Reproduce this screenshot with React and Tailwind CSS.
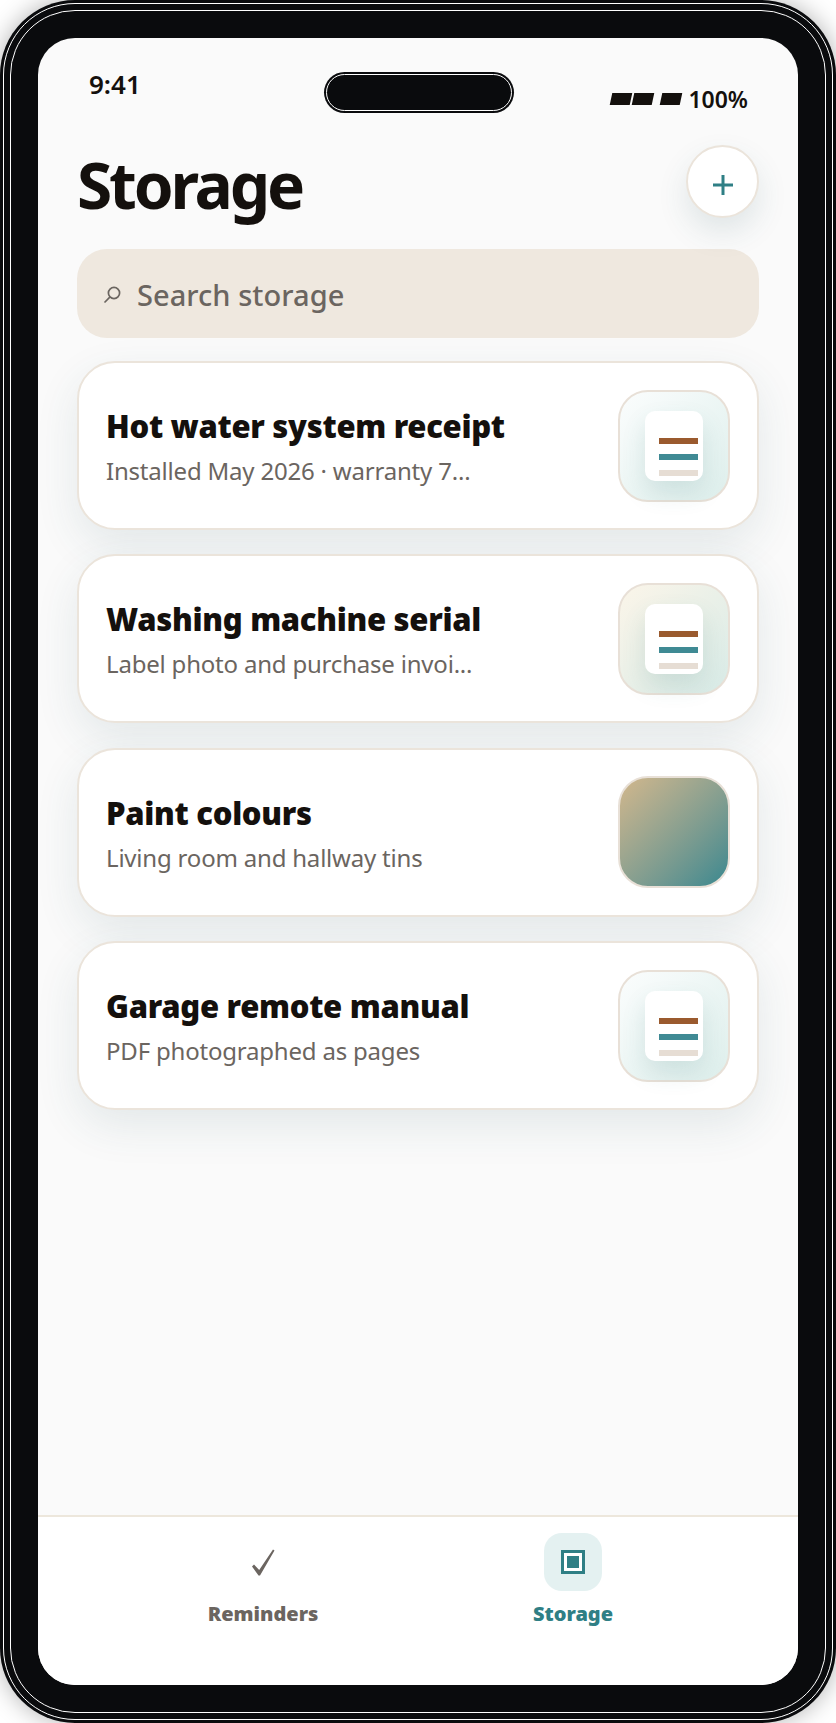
import React from "react";

const items = [
  { title: "Hot water system receipt", sub: "Installed May 2026 · warranty 7...", thumb: "bg-gradient-to-br from-[#fbfdfd] to-[#deefec]" },
  { title: "Washing machine serial", sub: "Label photo and purchase invoi...", thumb: "bg-gradient-to-br from-[#fbf5e9] to-[#d8ebe7]" },
  { title: "Paint colours", sub: "Living room and hallway tins", thumb: "bg-gradient-to-br from-[#d2b78c] to-[#37888f]", plain: true },
  { title: "Garage remote manual", sub: "PDF photographed as pages", thumb: "bg-gradient-to-br from-[#fbfdfd] to-[#deefec]" },
];

const Thumb = ({ item }) => (
  <div className={`w-[112px] h-[112px] shrink-0 rounded-[30px] border-2 border-[#e8e0d7] flex items-center justify-center ${item.thumb}`}>
    {!item.plain && (
      <div className="w-[58px] h-[70px] rounded-[10px] bg-white shadow-[0_12px_24px_rgba(47,110,115,0.14)] flex flex-col gap-[10px] pt-[27px] pl-[14px] pr-[5px]">
        <div className="h-[6px] bg-[#9a5a2e]"></div>
        <div className="h-[6px] bg-[#3f8a94]"></div>
        <div className="h-[6px] bg-[#e6ddd4]"></div>
      </div>
    )}
  </div>
);

const Card = ({ item }) => (
  <div className="h-[169px] rounded-[38px] bg-white border-2 border-[#ebe4db] shadow-[0_16px_44px_rgba(47,90,100,0.11)] flex items-center justify-between pl-[27px] pr-[27px]">
    <div className="min-w-0 pt-[3px]">
      <div className="text-[31px] leading-[38px] font-black text-[#14100d] tracking-[-0.3px]">{item.title}</div>
      <div className="mt-[10px] text-[24px] leading-[32px] text-[#6b6560] tracking-[-0.2px]">{item.sub}</div>
    </div>
    <Thumb item={item} />
  </div>
);

export default function App() {
  return (
    <div className="w-[836px] h-[1723px] bg-white font-['Noto_Sans','Open_Sans',sans-serif] overflow-hidden">
      {/* phone frame with its two thin white rings */}
      <div className="h-full rounded-[75px] bg-[#0a0b0d] p-[3px] shadow-[0_0_24px_rgba(0,0,0,0.3)]">
        <div className="h-full rounded-[72px] border border-white p-[6px]">
          <div className="h-full rounded-[65px] border border-white p-[27px]">
            <div className="h-full rounded-[37px] bg-[#fafafa] overflow-hidden flex flex-col">
              {/* status bar */}
              <div className="grid grid-cols-[1fr_190px_1fr] pt-[31px] pl-[51px] pr-[50px] shrink-0">
                <div className="text-[26px] leading-[30px] font-semibold text-[#14100d]">9:41</div>
                <div className="mt-[3px] h-[41px] rounded-full bg-[#0a0b0d] p-[2px]">
                  <div className="h-full rounded-full border border-white bg-[#0a0b0d]"></div>
                </div>
                <div className="mt-[15px] flex items-center justify-end gap-[7px] text-[23px] leading-[28px] font-semibold text-[#14100d]">
                  <div className="flex items-center">
                    <div className="w-[20px] h-[12px] bg-[#14100d] -skew-x-12"></div>
                    <div className="ml-[2px] w-[20px] h-[12px] bg-[#14100d] -skew-x-12"></div>
                    <div className="ml-[8px] w-[20px] h-[12px] bg-[#14100d] -skew-x-12"></div>
                  </div>
                  <span>100%</span>
                </div>
              </div>

              <div className="flex-1 px-[39px] pt-[32px]">
                {/* header */}
                <div className="flex items-center justify-between h-[72px]">
                  <h1 className="mt-[7px] text-[64px] leading-[72px] font-bold text-[#14100d] tracking-[-3.2px]">Storage</h1>
                  <div className="w-[73px] h-[73px] rounded-full bg-white border-2 border-[#ebe4db] shadow-[0_14px_30px_rgba(47,90,100,0.13)] flex items-center justify-center">
                    <svg width="22" height="22" viewBox="0 0 22 22" className="mt-[7px]">
                      <path d="M11 1v20M1 11h20" stroke="#2f7f85" strokeWidth="3" fill="none" />
                    </svg>
                  </div>
                </div>

                {/* search */}
                <div className="mt-[32px] h-[89px] rounded-[30px] bg-[#efe8df] flex items-center pl-[26px] gap-[16px]">
                  <svg width="18" height="18" viewBox="0 0 18 18" className="mt-[2px]">
                    <circle cx="11" cy="7" r="5.6" stroke="#6b6560" strokeWidth="1.7" fill="none" />
                    <path d="M6.8 11.2L1.5 16.5" stroke="#6b6560" strokeWidth="1.7" fill="none" />
                  </svg>
                  <span className="pt-[3px] text-[29px] leading-[36px] font-medium text-[#6b6560] tracking-[0.05px]">Search storage</span>
                </div>

                {/* list */}
                <div className="mt-[23px] flex flex-col gap-[24.4px]">
                  {items.map((item) => (
                    <Card key={item.title} item={item} />
                  ))}
                </div>
              </div>

              {/* tab bar */}
              <div className="h-[170px] shrink-0 bg-white border-t-2 border-[#ede7dc] grid grid-cols-2 px-[70px] pt-[16px]">
                <div className="flex flex-col items-center">
                  <div className="h-[58px] flex items-center justify-center">
                    <svg width="24" height="27" viewBox="0 0 24 27">
                      <path d="M1 17.5L3 15.5L8.2 21L22 0.5L23.5 1.5L9 26.5L7.5 26.5Z" fill="#6b6560" />
                    </svg>
                  </div>
                  <div className="mt-[9px] text-[20px] leading-[28px] font-black text-[#6b6560]">Reminders</div>
                </div>
                <div className="flex flex-col items-center">
                  <div className="w-[58px] h-[58px] rounded-[18px] bg-[#e4f1f1] flex items-center justify-center">
                    <svg width="24" height="24" viewBox="0 0 24 24">
                      <rect x="1.5" y="1.5" width="21" height="21" stroke="#2f7f85" strokeWidth="3" fill="#fff" />
                      <rect x="6" y="6" width="12" height="12" fill="#2f7f85" />
                    </svg>
                  </div>
                  <div className="mt-[9px] text-[20px] leading-[28px] font-black text-[#2f7f85]">Storage</div>
                </div>
              </div>
            </div>
          </div>
        </div>
      </div>
    </div>
  );
}
